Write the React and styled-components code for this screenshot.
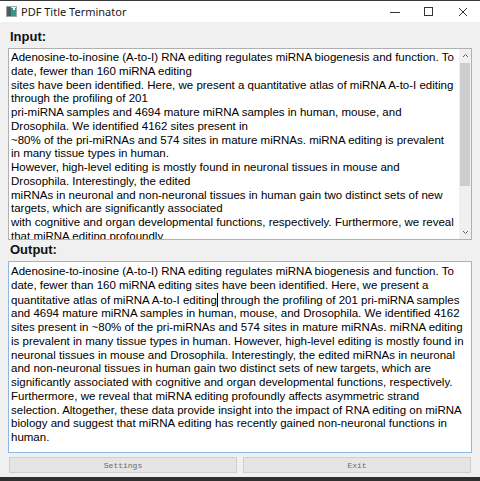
import styled, { createGlobalStyle } from "styled-components";

const inputLines = [
  "Adenosine-to-inosine (A-to-I) RNA editing regulates miRNA biogenesis and function. To",
  "date, fewer than 160 miRNA editing",
  "sites have been identified. Here, we present a quantitative atlas of miRNA A-to-I editing",
  "through the profiling of 201",
  "pri-miRNA samples and 4694 mature miRNA samples in human, mouse, and",
  "Drosophila. We identified 4162 sites present in",
  "~80% of the pri-miRNAs and 574 sites in mature miRNAs. miRNA editing is prevalent",
  "in many tissue types in human.",
  "However, high-level editing is mostly found in neuronal tissues in mouse and",
  "Drosophila. Interestingly, the edited",
  "miRNAs in neuronal and non-neuronal tissues in human gain two distinct sets of new",
  "targets, which are significantly associated",
  "with cognitive and organ developmental functions, respectively. Furthermore, we reveal",
  "that miRNA editing profoundly",
];

const outputLines = [
  "Adenosine-to-inosine (A-to-I) RNA editing regulates miRNA biogenesis and function. To",
  "date, fewer than 160 miRNA editing sites have been identified. Here, we present a",
  "CARET",
  "and 4694 mature miRNA samples in human, mouse, and Drosophila. We identified 4162",
  "sites present in ~80% of the pri-miRNAs and 574 sites in mature miRNAs. miRNA editing",
  "is prevalent in many tissue types in human. However, high-level editing is mostly found in",
  "neuronal tissues in mouse and Drosophila. Interestingly, the edited miRNAs in neuronal",
  "and non-neuronal tissues in human gain two distinct sets of new targets, which are",
  "significantly associated with cognitive and organ developmental functions, respectively.",
  "Furthermore, we reveal that miRNA editing profoundly affects asymmetric strand",
  "selection. Altogether, these data provide insight into the impact of RNA editing on miRNA",
  "biology and suggest that miRNA editing has recently gained non-neuronal functions in",
  "human.",
];

const GlobalStyle = createGlobalStyle`
  html, body {
    margin: 0;
    padding: 0;
    background: #2f2f2f;
  }
`;

const Window = styled.div`
  width: 480px;
  height: 477px;
  border-top: 1px solid #3c3c3c;
  box-sizing: border-box;
  background: #f0f0f0;
  display: flex;
  flex-direction: column;
  overflow: hidden;
`;

const TitleBar = styled.div`
  height: 21px;
  background: #ffffff;
  display: flex;
  align-items: center;
  padding-left: 6px;
  font-family: "Noto Sans", sans-serif;
  font-size: 11px;
  color: #1a1a1a;
`;

const TitleText = styled.span`
  margin-left: 4px;
  flex: 1;
`;

const Controls = styled.div`
  display: flex;
  align-items: center;
  height: 100%;
`;

const ControlButton = styled.div`
  width: 34px;
  height: 100%;
  display: flex;
  align-items: center;
  justify-content: center;
`;

const Body = styled.div`
  flex: 1;
  display: flex;
  flex-direction: column;
  padding: 0 8px;
`;

const Label = styled.div`
  font-family: "Liberation Sans", Arial, sans-serif;
  font-weight: bold;
  font-size: 13px;
  line-height: 16px;
  color: #111;
  padding-left: 2px;
  padding-top: ${(p) => p.$top}px;
  margin-bottom: ${(p) => p.$bottom}px;
`;

const TextBox = styled.div`
  height: 192px;
  box-sizing: border-box;
  border: 1px solid ${(p) => (p.$focused ? "#8ab8e2" : "#b0b0b0")};
  background: #ffffff;
  display: flex;
`;

const TextArea = styled.div`
  flex: 1;
  overflow: hidden;
  padding: ${(p) => p.$top}px 0 0 2px;
  font-family: "Liberation Sans", Arial, sans-serif;
  font-size: 11.5px;
  line-height: 13.75px;
  color: #000;
`;

const Line = styled.div`
  white-space: pre;
`;

const Caret = styled.span`
  display: inline-block;
  width: 0;
  height: 14px;
  border-left: 1px solid #000;
  vertical-align: -3px;
`;

const ScrollBar = styled.div`
  width: 12px;
  background: #f0f0f0;
  display: flex;
  flex-direction: column;
`;

const ScrollArrow = styled.div`
  height: 13px;
  display: flex;
  align-items: center;
  justify-content: center;
`;

const Track = styled.div`
  flex: 1;
  display: flex;
  flex-direction: column;
  padding: 1px 0;
`;

const Thumb = styled.div`
  margin: 0 1px;
  height: 123px;
  background: #cdcdcd;
`;

const ButtonRow = styled.div`
  display: flex;
  gap: 6px;
  padding: 0 1px;
  margin-top: 4px;
`;

const Button = styled.div`
  flex: 1;
  height: 16px;
  box-sizing: border-box;
  border: 1px solid #d0d0d0;
  background: #e5e5e5;
  display: flex;
  align-items: center;
  justify-content: center;
  font-family: "Liberation Mono", "Courier New", monospace;
  font-size: 8px;
  color: #6b6b6b;
`;

function AppIcon() {
  return (
    <svg width="11" height="11" viewBox="0 0 11 11">
      <rect x="0.5" y="0.5" width="10" height="10" fill="#e8ecec" stroke="#9aa" />
      <rect x="1" y="1" width="4" height="9" fill="#4f5a5a" />
      <rect x="5" y="2" width="5" height="8" fill="#2f9a8a" />
      <rect x="7" y="1" width="2" height="3" fill="#ffffff" />
    </svg>
  );
}

function Chevron({ up }) {
  return (
    <svg width="7" height="5" viewBox="0 0 7 5">
      <path
        d={up ? "M1 4 L3.5 1.5 L6 4" : "M1 1 L3.5 3.5 L6 1"}
        fill="none"
        stroke="#606060"
        strokeWidth="1"
      />
    </svg>
  );
}

export default function App() {
  return (
    <>
      <GlobalStyle />
      <Window>
        <TitleBar>
          <AppIcon />
          <TitleText>PDF Title Terminator</TitleText>
          <Controls>
            <ControlButton>
              <svg width="10" height="10" viewBox="0 0 10 10">
                <path d="M0 5.5 H10" stroke="#333" strokeWidth="1" />
              </svg>
            </ControlButton>
            <ControlButton>
              <svg width="10" height="10" viewBox="0 0 10 10">
                <rect x="0.5" y="0.5" width="8" height="8" fill="none" stroke="#333" />
              </svg>
            </ControlButton>
            <ControlButton>
              <svg width="10" height="10" viewBox="0 0 10 10">
                <path d="M1 1 L9 9 M9 1 L1 9" stroke="#333" strokeWidth="1" />
              </svg>
            </ControlButton>
          </Controls>
        </TitleBar>
        <Body>
          <Label $top={7} $bottom={3}>Input:</Label>
          <TextBox>
            <TextArea $top={2}>
              {inputLines.map((l, i) => (
                <Line key={i}>{l}</Line>
              ))}
            </TextArea>
            <ScrollBar>
              <ScrollArrow>
                <Chevron up />
              </ScrollArrow>
              <Track>
                <Thumb />
              </Track>
              <ScrollArrow>
                <Chevron />
              </ScrollArrow>
            </ScrollBar>
          </TextBox>
          <Label $top={2} $bottom={3}>Output:</Label>
          <TextBox $focused>
            <TextArea $top={3}>
              {outputLines.map((l, i) =>
                l === "CARET" ? (
                  <Line key={i}>
                    quantitative atlas of miRNA A-to-I editing
                    <Caret />
                    {" through the profiling of 201 pri-miRNA samples"}
                  </Line>
                ) : (
                  <Line key={i}>{l}</Line>
                )
              )}
            </TextArea>
          </TextBox>
          <ButtonRow>
            <Button>Settings</Button>
            <Button>Exit</Button>
          </ButtonRow>
        </Body>
      </Window>
    </>
  );
}
